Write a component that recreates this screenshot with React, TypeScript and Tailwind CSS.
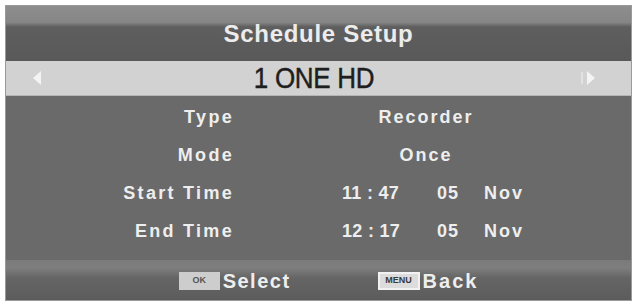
// Schedule Setup OSD screen
export default function App() {
  const rows = [
    { label: "Type", value: ["Recorder"] },
    { label: "Mode", value: ["Once"] },
    { label: "Start Time", value: ["11 : 47", "05", "Nov"] },
    { label: "End Time", value: ["12 : 17", "05", "Nov"] },
  ];

  return (
    <div className="w-[637px] h-[304px] bg-white p-[5px] font-['Liberation_Sans',Arial,sans-serif]">
      <div className="w-[627px] h-[296px] flex flex-col border border-[#9a9a9a]">
        {/* header */}
        <div className="h-[55px] flex items-center justify-center bg-[linear-gradient(to_bottom,#8e8e8e_0%,#858585_30%,#5e5e5e_38%,#595959_100%)]">
          <span className="text-[24px] font-bold tracking-[0.7px] text-[#ececec]">Schedule Setup</span>
        </div>

        {/* channel bar */}
        <div className="h-[35px] flex items-center justify-between pl-[27px] pr-[36px] bg-[#d2d2d2] border-b border-[#b5b5b5]">
          <span className="w-0 h-0 border-y-[7px] border-y-transparent border-r-[8px] border-r-[#f4f4f4]" />
          <span className="ml-[6px] text-[26px] text-[#1e1e1e] tracking-[-0.3px] scale-y-110 [-webkit-text-stroke:0.4px_#1e1e1e]">1 ONE HD</span>
          <div className="flex items-center gap-[4px]">
            <span className="w-[2px] h-[12px] bg-[#e2e2e2]" />
            <span className="w-0 h-0 border-y-[7px] border-y-transparent border-l-[8px] border-l-[#f4f4f4]" />
          </div>
        </div>

        {/* body */}
        <div className="flex-1 flex flex-col pt-[6px] gap-[8px] bg-[#6a6a6a]">
          {rows.map((r) => (
            <div key={r.label} className="h-[30px] flex items-center text-[18px] font-bold text-[#eeeeee]">
              <span className="w-[228px] text-right tracking-[2.3px]">{r.label}</span>
              <div className="ml-[108px] flex items-center">
                {r.value.length === 1 ? (
                  <span className="w-[168px] text-center tracking-[2px]">{r.value[0]}</span>
                ) : (
                  <>
                    <span className="w-[60px] tracking-[0.3px]">{r.value[0]}</span>
                    <span className="ml-[35px] tracking-[1px]">{r.value[1]}</span>
                    <span className="ml-[25px] tracking-[2px]">{r.value[2]}</span>
                  </>
                )}
              </div>
            </div>
          ))}
        </div>

        {/* footer */}
        <div className="h-[40px] flex items-end justify-center pb-[4px] pl-[20px] gap-[87px] bg-[linear-gradient(to_bottom,#7a7a7a_0%,#7e7e7e_20%,#656565_45%,#5c5c5c_100%)]">
          <div className="flex items-center gap-[3px]">
            <span className="w-[41px] h-[18px] flex items-center justify-center bg-[#cdcdcd] text-[9px] font-bold text-[#555]">OK</span>
            <span className="text-[20px] font-bold tracking-[1.5px] text-[#eeeeee]">Select</span>
          </div>
          <div className="flex items-center gap-[3px]">
            <span className="w-[42px] h-[18px] flex items-center justify-center bg-[#dcdcdc] border-2 border-[#f2f2f2] text-[9px] font-bold text-[#3a3a3a]">MENU</span>
            <span className="text-[20px] font-bold tracking-[2px] text-[#eeeeee]">Back</span>
          </div>
        </div>
      </div>
    </div>
  );
}
